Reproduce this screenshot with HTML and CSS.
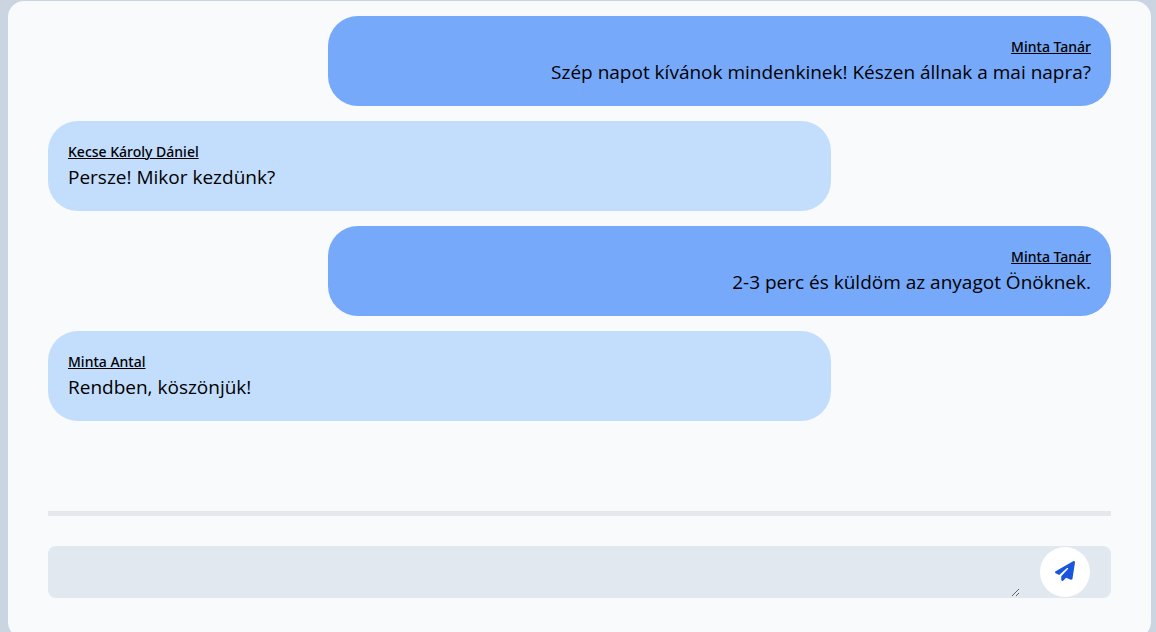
FILE: index.html
```
<!DOCTYPE html>
<html lang="hu">
<head>
  <meta charset="utf-8">
  <meta name="viewport" content="width=device-width, initial-scale=1">
  <title>Chat</title>
  <link rel="stylesheet" href="styles.css">
</head>
<body>
  <main class="chat">
    <section class="messages">
      <article class="message message-own">
        <p class="author">Minta Tanár</p>
        <p class="text">Szép napot kívánok mindenkinek! Készen állnak a mai napra?</p>
      </article>
      <article class="message">
        <p class="author">Kecse Károly Dániel</p>
        <p class="text">Persze! Mikor kezdünk?</p>
      </article>
      <article class="message message-own">
        <p class="author">Minta Tanár</p>
        <p class="text">2-3 perc és küldöm az anyagot Önöknek.</p>
      </article>
      <article class="message">
        <p class="author">Minta Antal</p>
        <p class="text">Rendben, köszönjük!</p>
      </article>
    </section>
    <form class="composer">
      <textarea class="input" aria-label="Üzenet" rows="1"></textarea>
      <button class="send" type="button" aria-label="Küldés">
        <svg class="icon" viewBox="0 0 512 512" aria-hidden="true"><path fill="currentColor" d="M498.1 5.6c10.1 7 15.4 19.1 13.5 31.2l-64 416c-1.5 9.7-7.4 18.2-16 23s-18.9 5.4-28 1.6L284 427.7l-68.5 74.1c-8.9 9.7-22.9 12.9-35.2 8.1S160 493.2 160 480V396.4c0-4 1.5-7.8 4.2-10.7L331.8 202.8c5.8-6.3 5.6-16-.4-22s-15.7-6.4-22-.7L106 360.8 17.7 316.6C7.1 311.3 .3 300.7 0 288.9s5.9-22.8 16.1-28.7l448-256c10.7-6.1 23.9-5.5 34 1.4z"/></svg>
      </button>
    </form>
  </main>
</body>
</html>
```
FILE: styles.css
```
* {
  box-sizing: border-box;
}

body {
  margin: 0;
  padding: 1px 5px 0 8px;
  background: #cbd5e1;
  color: #000;
  font-family: "Segoe UI", "Open Sans", "Noto Sans", sans-serif;
  overflow: hidden;
}

.chat {
  padding: 15px 40px 40px;
  border-radius: 16px;
  background: #f8fafc;
}

.messages {
  display: flex;
  flex-direction: column;
  gap: 15px;
  padding-bottom: 90px;
  border-bottom: 5px solid #e5e7eb;
}

.message {
  margin-right: 280px;
  padding: 20px 20px 19px;
  border-radius: 30px;
  background: #c3ddfd;
}

.message-own {
  margin-right: 0;
  margin-left: 280px;
  background: #76a9fa;
  text-align: right;
}

.author {
  margin: 0;
  font-family: "Segoe UI", "Noto Sans", sans-serif;
  font-size: 14px;
  font-weight: 500;
  line-height: 21px;
  text-decoration: underline;
}

.text {
  margin: 0;
  font-size: 19px;
  font-weight: 400;
  line-height: 30px;
}

.composer {
  display: flex;
  align-items: center;
  gap: 20px;
  margin-top: 30px;
  padding: 1px 21px 1px 0;
  border-radius: 8px;
  background: #e2e8f0;
}

.input {
  flex: 1;
  min-width: 0;
  height: 50px;
  padding: 10px 20px;
  border: 0;
  border-radius: 8px;
  outline: 0;
  background: transparent;
  font: inherit;
  font-size: 19px;
  line-height: 30px;
  resize: vertical;
}

.send {
  display: grid;
  place-items: center;
  width: 50px;
  height: 50px;
  padding: 0 0 2px;
  border: 0;
  border-radius: 50%;
  background: #fff;
  color: #1a56db;
  cursor: pointer;
}

.icon {
  width: 20px;
  height: 20px;
}
```
